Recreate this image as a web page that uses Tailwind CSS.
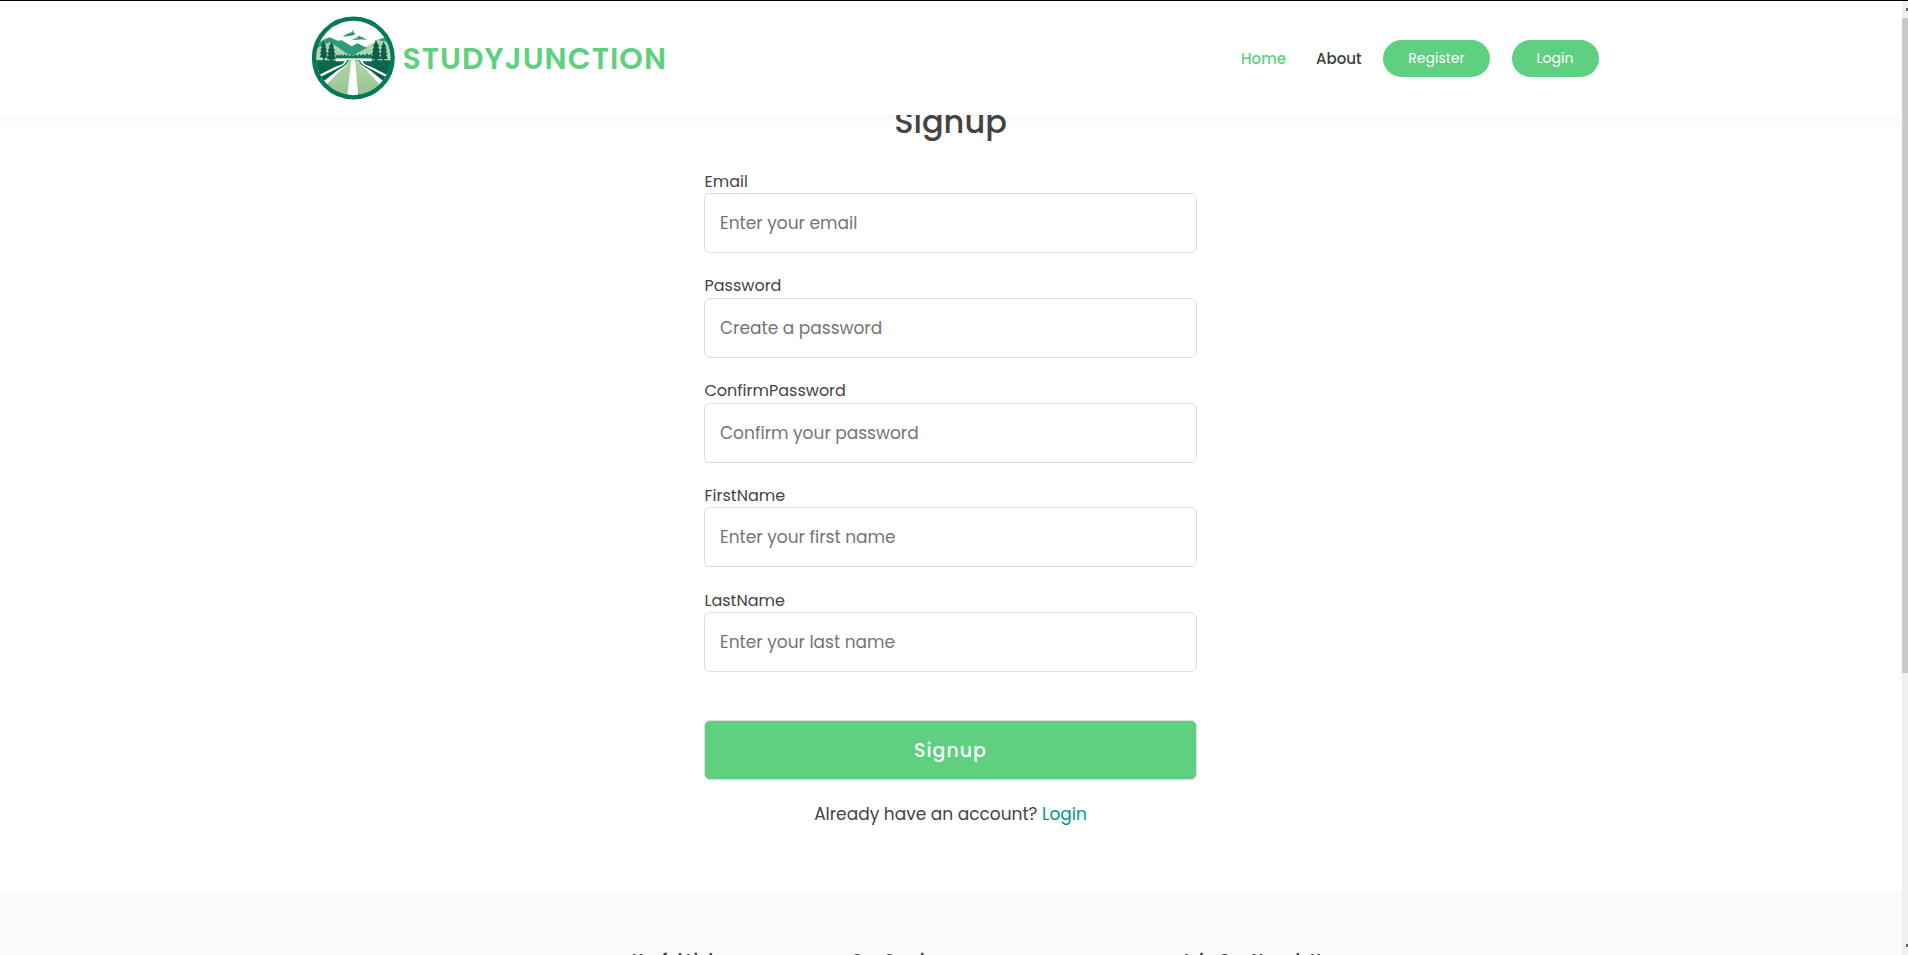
<!DOCTYPE html>
<html lang="en">
<head>
<meta charset="utf-8">
<title>StudyJunction - Signup</title>
<script src="https://cdn.jsdelivr.net/npm/@tailwindcss/browser@4"></script>
</head>
<body class="h-screen overflow-hidden bg-white text-[#444444] font-['Poppins','Inter',sans-serif]">
<div class="flex h-full flex-col border-t border-black">
  <div class="flex min-h-0 flex-1">
    <div class="flex min-w-0 flex-1 flex-col overflow-hidden">
      <header class="relative z-10 flex h-[114px] shrink-0 items-center bg-white pl-[305px] pr-[303px] shadow-[0_0_20px_rgba(0,0,0,0.06)]">
        <svg class="mt-[9px] h-[95px] w-[95px] shrink-0 self-start" viewBox="0 0 285 285">
          <defs>
            <clipPath id="disc"><circle cx="145" cy="144" r="112"/></clipPath>
            <linearGradient id="hill" x1="0" y1="0" x2="0" y2="1"><stop offset="0" stop-color="#a5cfa5"/><stop offset="1" stop-color="#b9dab5"/></linearGradient>
            <linearGradient id="bank" x1="0" y1="0" x2="0" y2="1"><stop offset="0" stop-color="#0d6b50"/><stop offset="1" stop-color="#01503c"/></linearGradient>
            <linearGradient id="road" x1="0" y1="0" x2="0" y2="1"><stop offset="0" stop-color="#b4d6a9"/><stop offset="1" stop-color="#94c08f"/></linearGradient>
          </defs>
          <circle cx="145" cy="144" r="118" fill="#fefefe"/>
          <g clip-path="url(#disc)">
            <path d="M30 104 L74 84 L148 128 L210 96 L262 84 V160 H30Z" fill="url(#hill)"/>
            <path d="M30 104 L58 88 L74 82 L98 92 L110 91 L140 109 L158 100 L186 114 L144 136 L126 131 L76 96 L48 108 L30 118Z" fill="#2f9b7a"/>
            <path d="M214 91 L241 82 L262 88 V105 L240 94Z" fill="#2f9b7a"/>
            <path d="M92 150 V132 L96 137 L100 133 L104 138 L109 132 L114 138 L119 131 L124 138 L129 133 L134 138 L140 134 L145 138 L151 133 L157 138 L163 131 L168 137 L174 131 L180 137 L186 129 L191 136 L196 132 L203 137 V150Z" fill="#12765a"/>
            <path d="M30 151 H96 V146 H198 V151 H262 V260 H30Z" fill="url(#bank)"/>
            <path d="M92 145 H202 V150 H92Z" fill="#d9e9d1"/>
            <path d="M129 151 H163 C162 163 177 172 190 180 L250 230 V270 H40 V230 L106 178 C119 169 128 162 129 151Z" fill="url(#road)"/>
            <path d="M92 148 H126 C126 160 116 167 101 173 L36 206 V198 L88 172 C102 167 118 162 119 154 H92Z" fill="#fff"/>
            <path d="M200 148 H164 C165 160 177 167 190 173 L253 206 V198 L201 172 C187 167 174 162 173 154 H200Z" fill="#fff"/>
            <path d="M129 153 C128 163 116 171 102 178 L40 226 L56 232 L108 180 C121 172 128 164 129 153Z" fill="#fff"/>
            <path d="M163 153 C164 163 178 171 191 178 L249 224 L232 232 L184 180 C172 172 164 164 163 153Z" fill="#fff"/>
            <path d="M139 150 H150 L160 262 H126Z" fill="#fff"/>
            <path d="M56 92 L59 103 L64 109 L61 111 L66 120 L62 121 L68 131 L63 132 L69 142 L59 144 V153 H54 V144 L44 141 L49 132 L45 130 L50 121 L46 119 L51 111 L48 109Z" fill="#0b5f49"/>
            <path d="M79 92 L83 103 L87 110 L84 112 L90 122 L86 123 L92 133 L87 134 L93 146 L82 149 V154 H76 V149 L65 146 L71 134 L66 133 L72 123 L68 122 L74 112 L71 110 L76 103Z" fill="#0b5f49"/>
            <path d="M213 87 L217 100 L223 109 L219 111 L225 121 L221 123 L227 133 L222 135 L228 146 L216 149 V156 H210 V149 L199 146 L204 135 L200 133 L205 123 L202 121 L207 111 L204 109 L209 100Z" fill="#0b5f49"/>
            <path d="M236 94 L239 103 L244 110 L241 112 L246 121 L242 123 L248 133 L243 134 L249 146 L238 148 V154 H233 V148 L224 145 L229 134 L225 133 L230 123 L226 121 L231 112 L228 110 L233 103Z" fill="#0b5f49"/>
          </g>
          <path d="M115 78 L130 70 Q142 69 146 57 L145 66 L151 72 Q144 78 115 80Z" fill="#2f9b7a"/>
          <path d="M139 90 Q153 86 163 77 L187 89 Q162 87 139 90Z" fill="#2f9b7a"/>
          <circle cx="145" cy="144" r="118" fill="none" stroke="#027a5a" stroke-width="13"/>
        </svg>
        <span class="ml-[2.5px] text-[30px] font-semibold tracking-[1px] text-[#5fcf80]">STUDYJUNCTION</span>
        <nav class="ml-auto flex items-center text-[15px] font-medium">
          <a class="w-[75px] pt-[2px] text-[#5fcf80]">Home</a>
          <a class="w-[67px] pt-[2px] text-[#37423b]">About</a>
          <a class="mr-[22px] flex h-[37px] w-[107px] items-center justify-center rounded-full bg-[#5fcf80] text-sm font-normal text-white">Register</a>
          <a class="flex h-[37px] w-[87px] items-center justify-center rounded-full bg-[#5fcf80] pr-px text-sm font-normal text-white">Login</a>
        </nav>
      </header>
      <main class="flex h-[776px] shrink-0 flex-col items-center pr-px">
        <h1 class="-mt-[13px] mb-[28.6px] h-10 text-[32px] leading-10 font-medium">Signup</h1>
        <form class="w-[493px]">
          <div class="mb-[22.15px]">
            <label class="block h-[22.6px] pl-[0.5px] text-base leading-[22px]">Email</label>
            <input class="block h-[60px] w-full rounded-md border border-[#dddddd] bg-white px-[15px] text-[17px] placeholder:text-[#757575]" placeholder="Enter your email">
          </div>
          <div class="mb-[22.15px]">
            <label class="block h-[22.6px] pl-[0.5px] text-base leading-[22px]">Password</label>
            <input class="block h-[60px] w-full rounded-md border border-[#dddddd] bg-white px-[15px] text-[17px] placeholder:text-[#757575]" placeholder="Create a password">
          </div>
          <div class="mb-[22.15px]">
            <label class="block h-[22.6px] pl-[0.5px] text-base leading-[22px]">ConfirmPassword</label>
            <input class="block h-[60px] w-full rounded-md border border-[#dddddd] bg-white px-[15px] text-[17px] placeholder:text-[#757575]" placeholder="Confirm your password">
          </div>
          <div class="mb-[22.15px]">
            <label class="block h-[22.6px] pl-[0.5px] text-base leading-[22px]">FirstName</label>
            <input class="block h-[60px] w-full rounded-md border border-[#dddddd] bg-white px-[15px] text-[17px] placeholder:text-[#757575]" placeholder="Enter your first name">
          </div>
          <div class="mb-[47.8px]">
            <label class="block h-[22.6px] pl-[0.5px] text-base leading-[22px]">LastName</label>
            <input class="block h-[60px] w-full rounded-md border border-[#dddddd] bg-white px-[15px] text-[17px] placeholder:text-[#757575]" placeholder="Enter your last name">
          </div>
          <button type="button" class="block h-[60px] w-full rounded-md border border-[#dddddd] bg-[#5fcf80] pt-[2px] text-[19px] font-medium tracking-[1px] text-white">Signup</button>
          <p class="mt-[22px] text-center text-[17px] leading-6">Already have an account? <a class="text-[#009688]">Login</a></p>
        </form>
      </main>
      <footer class="flex flex-1 overflow-hidden bg-[#fafafa] pl-[632px] pt-[57px] text-base leading-6 font-semibold text-[#37423b]">
        <h4 class="w-[219px] shrink-0">Useful Links</h4>
        <h4 class="w-[329px] shrink-0">Our Services</h4>
        <h4 class="shrink-0">Join Our Newsletter</h4>
      </footer>
    </div>
    <div class="flex w-[6px] shrink-0 flex-col items-end overflow-hidden bg-[#f0f0f0]">
      <div class="h-[17px] pt-[7px]"><div class="h-[3px] w-[2px] bg-[#606060]"></div></div>
      <div class="h-[655px] w-full bg-[#c9c9c9]"></div>
      <div class="mt-auto h-[11px]"><div class="h-[3px] w-[2px] bg-[#606060]"></div></div>
    </div>
  </div>
</div>
</body>
</html>
